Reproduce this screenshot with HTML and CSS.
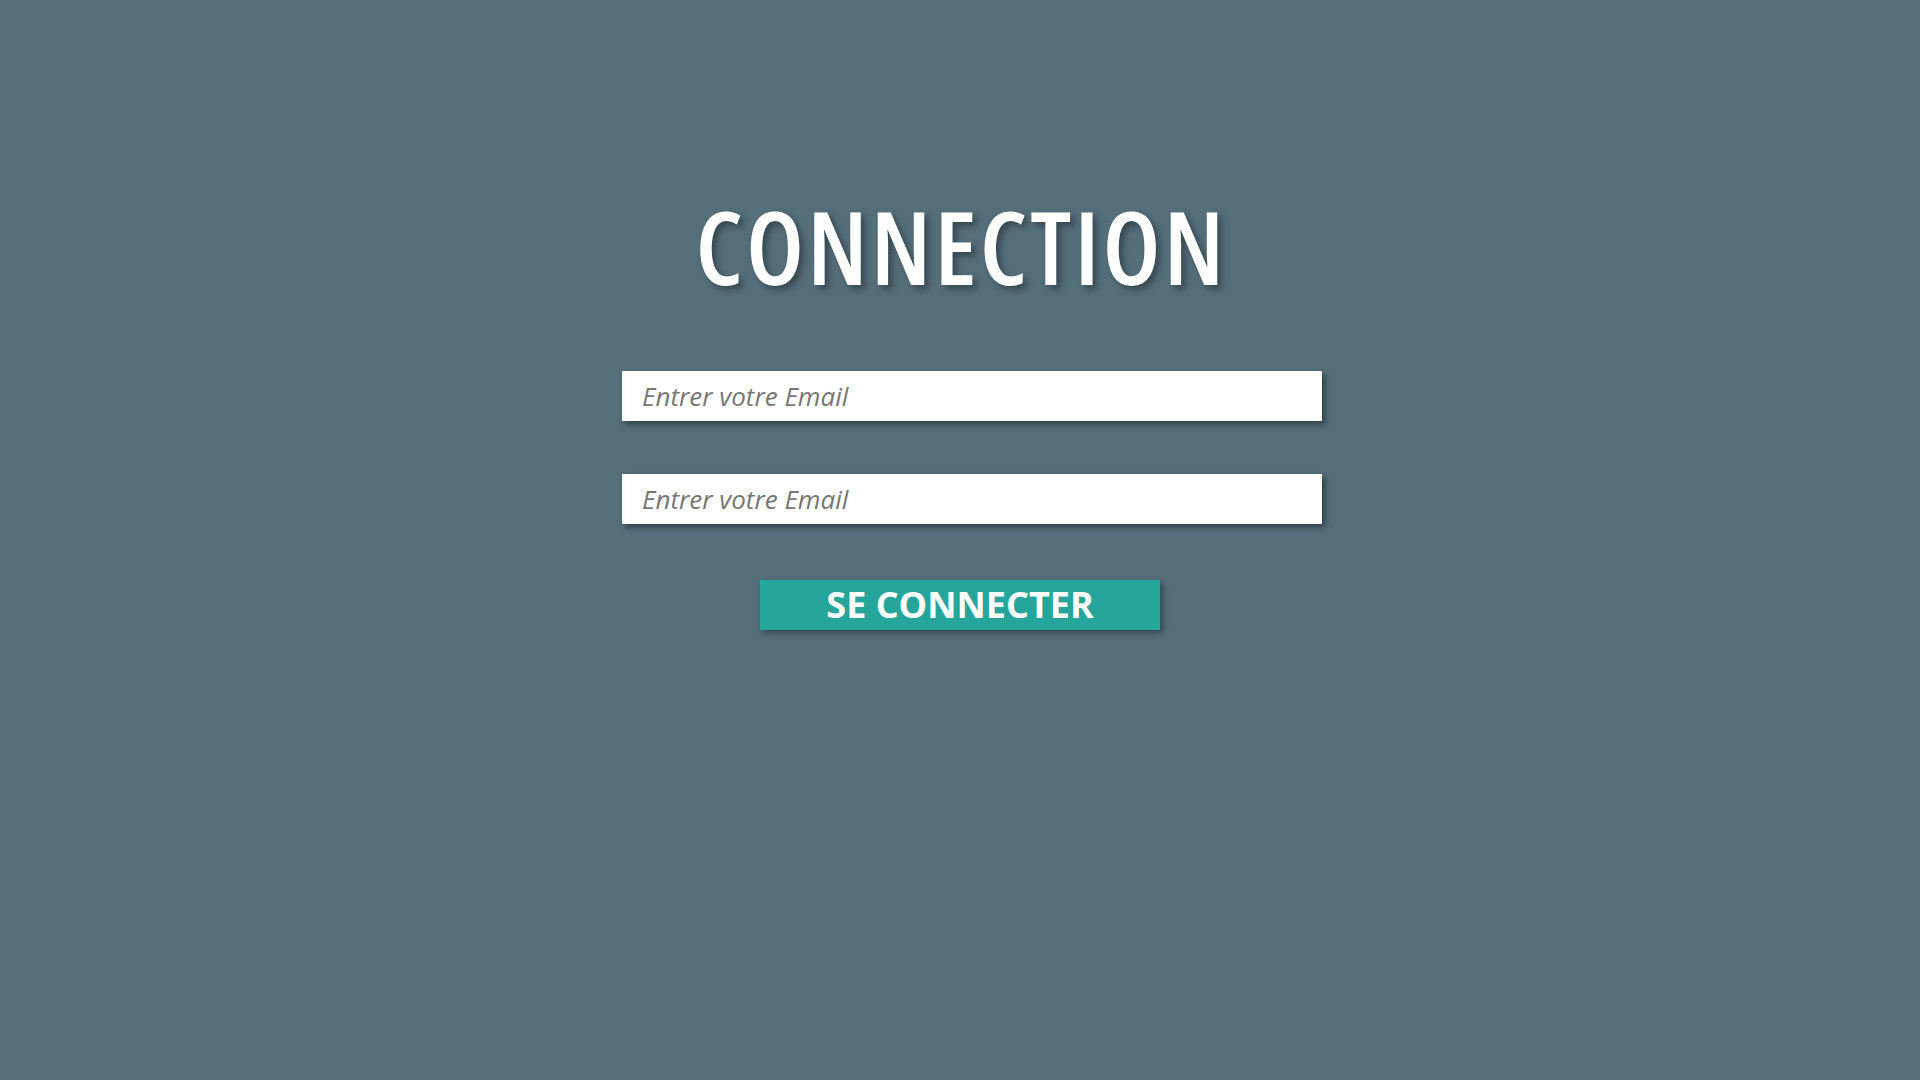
FILE: index.html
```html
<!DOCTYPE html>
<html lang="fr">
<head>
<meta charset="utf-8">
<title>Connection</title>
<link rel="stylesheet" href="styles.css">
</head>
<body>
<main class="page">
  <h1 class="title">CONNECTION</h1>
  <form class="form">
    <div class="fields">
      <input class="field" type="email" placeholder="Entrer votre Email">
      <input class="field" type="password" placeholder="Entrer votre Email">
    </div>
    <button class="btn" type="button">SE CONNECTER</button>
  </form>
</main>
</body>
</html>
```
FILE: styles.css
```css
html, body {
  margin: 0;
  padding: 0;
}
body {
  background: #546e7a;
  min-height: 100vh;
  font-family: "Open Sans", "Noto Sans", sans-serif;
}
.page {
  display: flex;
  flex-direction: column;
  align-items: center;
  padding-top: 195px;
}
.title {
  margin: 0;
  padding-left: 3px;
  font-size: 102px;
  line-height: 102px;
  font-weight: 600;
  font-stretch: 75%;
  letter-spacing: 3.2px;
  color: #fff;
  text-shadow: 4px 4px 6px rgba(0, 0, 0, 0.35);
}
.form {
  display: flex;
  flex-direction: column;
  align-items: center;
  margin-top: 74px;
}
.fields {
  display: flex;
  flex-direction: column;
  gap: 53px;
  padding-left: 24px;
}
.field {
  box-sizing: border-box;
  width: 700px;
  height: 50px;
  border: 0;
  outline: none;
  margin: 0;
  padding: 0 20px;
  background: #fff;
  font-family: "Open Sans", "Noto Sans", sans-serif;
  font-size: 26px;
  font-style: italic;
  color: #333;
  box-shadow: 3px 3px 6px rgba(0, 0, 0, 0.45);
}
.field::placeholder {
  color: #777;
  opacity: 1;
}
.btn {
  margin-top: 56px;
  width: 400px;
  height: 50px;
  border: 0;
  padding: 0;
  background: #26a69a;
  color: #fff;
  font-family: "Open Sans", "Noto Sans", sans-serif;
  font-size: 36px;
  font-weight: 700;
  line-height: 50px;
  cursor: pointer;
  box-shadow: 3px 3px 6px rgba(0, 0, 0, 0.35);
}
```
